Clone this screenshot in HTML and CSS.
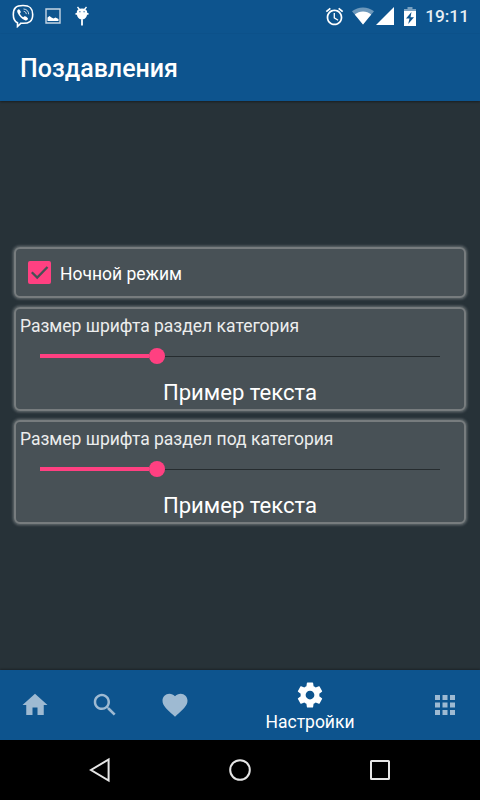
FILE: index.html
```html
<!DOCTYPE html>
<html lang="ru">
<head>
  <meta charset="UTF-8">
  <meta name="viewport" content="width=device-width, initial-scale=1.0">
  <title>Поздавления</title>
  <link rel="stylesheet" href="styles.css">
</head>
<body>
  <div class="status-bar">
    <div class="notifications">
      <svg width="22" height="24" viewBox="0 0 22 24">
        <path d="M11 1.500C4 1.500 1.300 4 1.300 10.500c0 4.500 1.200 7 4.200 8.200V22.500l3.500-3.300c8.300.7 11.700-2 11.700-8.700 0-6.500-2.700-9-9.700-9z" fill="none" stroke="#fff" stroke-width="1.600"/>
        <path d="M6.500 5.200c-1.600.8-1.600 2-.8 3.800 1.500 3.300 3.700 5.700 7.300 7.300 1.500.6 2.500 0 3-1.500.2-1-2.500-2.900-3.500-2.600-.7.3-.8 1.100-1.500.9C9.600 12.500 8.300 11 7.900 9.600c-.1-.7.900-.9.900-1.700 0-.7-1.500-2.900-2.300-2.700z" fill="#fff"/>
        <path d="M11.500 5c3.300.2 5.100 2.200 5.200 5.300M11.700 7.300c1.700.2 2.500 1.200 2.600 2.800" fill="none" stroke="#fff" stroke-width=".8"/>
      </svg>
      <svg width="16" height="16" viewBox="0 0 16 16">
        <path d="M1 1h14v14H1z" fill="none" stroke="#c5d5e4" stroke-width="1.400"/>
        <path d="M2.500 13V9.500L4.500 8l2 1.500 2 1 2-1 3 1.500v2z" fill="#fff"/>
      </svg>
      <svg width="16" height="22" viewBox="0 0 16 22">
        <path d="M3.500 2l2 2.500M12.500 2l-2 2.500" stroke="#fff" stroke-width="1.300"/>
        <path d="M8 3.500c3.500 0 5.300 1.500 5.300 4.500S11.500 14.500 8 14.500 2.700 11.200 2.700 8 4.500 3.500 8 3.500zM1.500 8h13v1.800h-13zM7.100 14h1.800v6.500H7.100z" fill="#fff"/>
        <path d="M5.300 6.200h1.200v1H5.300zM9.500 6.200h1.200v1H9.500z" fill="#0d548e"/>
      </svg>
    </div>
    <div class="system">
      <svg class="alarm" width="21" height="21" viewBox="0 0 24 24">
        <path d="M22 5.720l-4.600-3.860-1.290 1.530 4.600 3.860L22 5.720zM7.880 3.390L6.600 1.860 2 5.710l1.290 1.530 4.590-3.850zM12.500 8H11v6l4.750 2.850.75-1.230-4-2.370V8zM12 4c-4.970 0-9 4.030-9 9s4.020 9 9 9c4.970 0 9-4.030 9-9s-4.030-9-9-9zm0 16c-3.870 0-7-3.130-7-7s3.130-7 7-7 7 3.130 7 7-3.130 7-7 7z" fill="#fff"/>
      </svg>
      <svg class="wifi" width="22" height="18" viewBox="0 0 22 18">
        <path d="M11 17.500L0 4.200C6-.9 16-.9 22 4.200z" fill="#fff" opacity=".4"/>
        <path d="M11 17.500L2.800 7.500c4.500-4 11.900-4 16.400 0z" fill="#fff"/>
      </svg>
      <svg class="signal" width="18" height="18" viewBox="0 0 18 18">
        <path d="M0 18L18 0v18z" fill="#fff"/>
      </svg>
      <svg class="battery" width="12" height="19" viewBox="0 0 12 19">
        <path d="M3.500 0h5v2H12v3H0V2h3.500z" fill="#fff" opacity=".45"/>
        <path d="M0 4h12v15H0z" fill="#fff"/>
        <path d="M7.500 5L2 11.500h3.500L4.200 17 10 10.300H6.500z" fill="#0d548e"/>
      </svg>
      <span class="clock">19:11</span>
    </div>
  </div>

  <header>
    <h1>Поздавления</h1>
  </header>

  <main>
    <div class="card night-mode">
      <div class="checkbox">
        <svg width="23" height="23" viewBox="0 0 23 23">
          <path d="M3.800 11.200l5.400 5.300L19.500 6" fill="none" stroke="#475055" stroke-width="2.300"/>
        </svg>
      </div>
      <span>Ночной режим</span>
    </div>

    <div class="card font-size">
      <div class="label">Размер шрифта раздел категория</div>
      <div class="slider">
        <div class="filled"></div>
        <div class="thumb"></div>
        <div class="rest"></div>
      </div>
      <div class="sample">Пример текста</div>
    </div>

    <div class="card font-size">
      <div class="label">Размер шрифта раздел под категория</div>
      <div class="slider">
        <div class="filled"></div>
        <div class="thumb"></div>
        <div class="rest"></div>
      </div>
      <div class="sample">Пример текста</div>
    </div>
  </main>

  <nav class="tabs">
    <div class="tab">
      <svg width="30" height="30" viewBox="0 0 24 24"><path d="M10 20v-6h4v6h5v-8h3L12 3 2 12h3v8z"/></svg>
    </div>
    <div class="tab">
      <svg width="30" height="30" viewBox="0 0 24 24"><path d="M15.500 14h-.79l-.28-.27C15.410 12.590 16 11.110 16 9.500 16 5.910 13.090 3 9.500 3S3 5.910 3 9.500 5.910 16 9.500 16c1.610 0 3.090-.59 4.230-1.570l.27.28v.79l5 4.990L20.490 19l-4.990-5zm-6 0C7.010 14 5 11.990 5 9.500S7.010 5 9.500 5 14 7.010 14 9.500 11.990 14 9.500 14z"/></svg>
    </div>
    <div class="tab">
      <svg width="30" height="30" viewBox="0 0 24 24"><path d="M12 21.350l-1.450-1.320C5.400 15.360 2 12.280 2 8.500 2 5.420 4.420 3 7.500 3c1.740 0 3.410.81 4.500 2.090C13.090 3.810 14.760 3 16.500 3 19.580 3 22 5.420 22 8.500c0 3.780-3.400 6.860-8.550 11.540L12 21.350z"/></svg>
    </div>
    <div class="tab active">
      <svg width="30" height="30" viewBox="0 0 24 24"><path d="M19.430 12.980c.04-.32.07-.64.07-.98s-.03-.66-.07-.98l2.110-1.650c.19-.15.24-.42.12-.64l-2-3.460c-.12-.22-.39-.3-.61-.22l-2.490 1c-.52-.4-1.080-.73-1.690-.98l-.38-2.650C14.460 2.180 14.250 2 14 2h-4c-.25 0-.46.18-.49.42l-.38 2.650c-.61.25-1.170.59-1.690.98l-2.490-1c-.23-.09-.49 0-.61.22l-2 3.460c-.13.22-.07.49.12.64l2.110 1.650c-.04.32-.07.65-.07.98s.03.66.07.98l-2.110 1.650c-.19.15-.24.42-.12.64l2 3.460c.12.22.39.3.61.22l2.490-1c.52.4 1.080.73 1.690.98l.38 2.650c.03.24.24.42.49.42h4c.25 0 .46-.18.49-.42l.38-2.650c.61-.25 1.170-.59 1.690-.98l2.490 1c.23.09.49 0 .61-.22l2-3.460c.12-.22.07-.49-.12-.64l-2.110-1.650zM12 15.500c-1.930 0-3.500-1.570-3.500-3.500s1.570-3.500 3.500-3.500 3.500 1.570 3.500 3.500-1.570 3.500-3.500 3.500z"/></svg>
      <span>Настройки</span>
    </div>
    <div class="tab">
      <svg width="30" height="30" viewBox="0 0 24 24"><path d="M4 8h4V4H4v4zm6 12h4v-4h-4v4zm-6 0h4v-4H4v4zm0-6h4v-4H4v4zm6 0h4v-4h-4v4zm6-10v4h4V4h-4zm-6 4h4V4h-4v4zm6 6h4v-4h-4v4zm0 6h4v-4h-4v4z"/></svg>
    </div>
  </nav>

  <div class="system-nav">
    <svg width="24" height="26" viewBox="0 0 24 26"><path d="M20.600 2.500v21L3 13z"/></svg>
    <svg width="24" height="26" viewBox="0 0 24 26"><circle cx="12" cy="13" r="9.800"/></svg>
    <svg width="24" height="26" viewBox="0 0 24 26"><rect x="3" y="4" width="18" height="18" rx=".5"/></svg>
  </div>
</body>
</html>
```
FILE: styles.css
```css
* {
  box-sizing: border-box;
}
body {
  font-family: Roboto, "Noto Sans", sans-serif;
  background-color: #273238;
  color: #fff;
  margin: 0;
  height: 800px;
  display: flex;
  flex-direction: column;
  overflow: hidden;
}
svg {
  display: block;
  flex: none;
}
.status-bar {
  height: 34px;
  padding: 0 11px 0 12px;
  background-color: #0d548e;
  display: flex;
  justify-content: space-between;
}
.notifications {
  display: flex;
  align-items: center;
  gap: 11px;
  height: 32px;
}
.notifications svg:nth-child(3) {
  margin-left: 2px;
}
.system {
  display: flex;
  align-items: center;
  height: 32px;
}
.wifi {
  margin-left: 7px;
}
.signal {
  margin-left: 2px;
}
.battery {
  margin-left: 10px;
}
.clock {
  margin-left: 9px;
  font-size: 17.3px;
  font-weight: 500;
  color: #e7eef4;
}
header {
  height: 67px;
  padding: 0 20px;
  background-color: #0d548e;
  box-shadow: 0 1px 2px rgba(0, 0, 0, 0.4);
}
h1 {
  margin: 0;
  font-size: 25px;
  font-weight: 500;
  line-height: 69px;
}
main {
  flex: 1;
  display: flex;
  flex-direction: column;
  justify-content: center;
  gap: 9px;
  padding: 0 14px;
}
.card {
  background-color: #485156;
  border: 2px solid #777c7e;
  border-radius: 6px;
  box-shadow: 0 0 0 1px #50595d, 0 0 2px 2px #485156;
}
.night-mode {
  height: 51px;
  padding-left: 12px;
  display: flex;
  align-items: center;
  gap: 9px;
  font-size: 17.5px;
}
.night-mode span {
  padding-top: 2px;
}
.checkbox {
  width: 23px;
  height: 23px;
  border-radius: 2px;
  background-color: #ff4081;
}
.font-size {
  height: 104px;
  padding: 6px 4px 0;
}
.label {
  font-size: 17.5px;
  line-height: 22px;
  color: #eceded;
}
.slider {
  display: flex;
  align-items: center;
  height: 16px;
  margin: 11px 20px 0;
}
.filled {
  width: 109px;
  height: 4px;
  background-color: #ff4081;
}
.thumb {
  width: 16px;
  height: 16px;
  border-radius: 50%;
  background-color: #ff4081;
}
.rest {
  flex: 1;
  height: 1px;
  background-color: #262c2f;
}
.sample {
  margin-top: 14px;
  font-size: 22.1px;
  line-height: 28px;
  text-align: center;
}
.tabs {
  height: 70px;
  background-color: #0d548e;
  box-shadow: 0 -1px 2px rgba(0, 0, 0, 0.3);
  display: flex;
}
.tab {
  width: 70px;
  display: flex;
  flex-direction: column;
  align-items: center;
  justify-content: center;
}
.tab svg {
  fill: #9ebad2;
}
.tab.active {
  flex: 1;
  justify-content: flex-start;
  padding-top: 10px;
  font-size: 17.5px;
  line-height: 24px;
}
.tab.active svg {
  fill: #fff;
}
.system-nav {
  height: 60px;
  background-color: #000;
  display: flex;
  align-items: center;
  justify-content: center;
  gap: 116px;
}
.system-nav svg {
  fill: none;
  stroke: #e6e6e6;
  stroke-width: 2;
}
```
